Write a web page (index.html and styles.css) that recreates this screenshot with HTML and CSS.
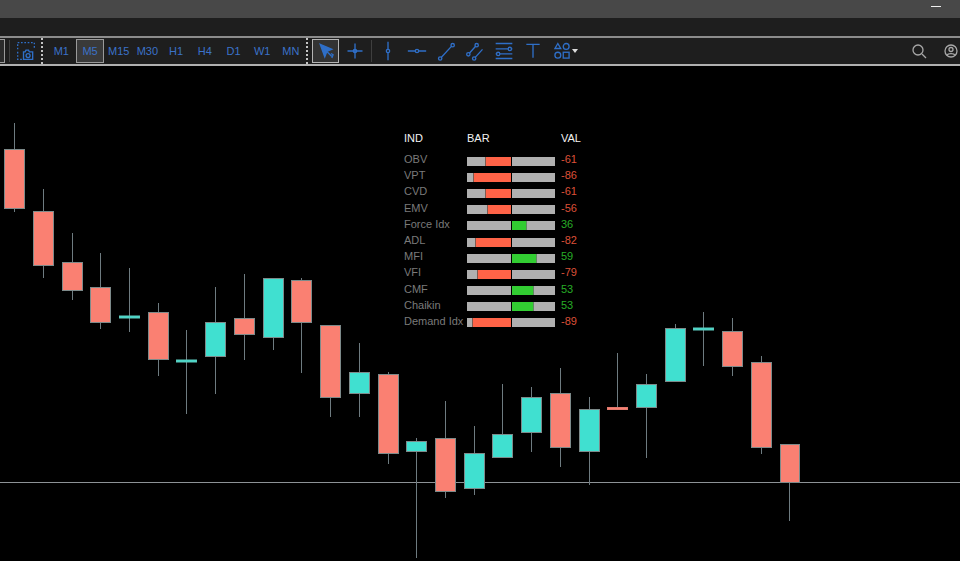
FILE: index.html
```html
<!DOCTYPE html>
<html lang="en">
<head>
    <meta charset="UTF-8">
    <meta name="viewport" content="width=device-width, initial-scale=1.0">
    <title>Chart Terminal</title>
    <link rel="stylesheet" href="styles.css">
</head>
<body>
    <div class="title-bar"><span class="window-dash"></span></div>
    <div class="menu-bar"></div>

    <!-- Toolbar -->
    <div class="toolbar">
        <div class="tool-cut"></div>
        <div class="tool-divider tool-divider-left"></div>
        <button class="tool tool-camera">
            <svg class="icon" width="20" height="20" viewBox="0 0 24 24">
                <path class="dash-line" d="M2 10V2h20v7M2 13v9h5"/>
                <path d="M9 13h2l1-2h3l1 2h4v9H9z"/>
                <circle cx="14.500" cy="17.500" r="2.400"/>
            </svg>
        </button>
        <div class="tool-dots"></div>
        <div class="timeframes">
            <button class="tf">M1</button>
            <button class="tf tf-active">M5</button>
            <button class="tf">M15</button>
            <button class="tf">M30</button>
            <button class="tf">H1</button>
            <button class="tf">H4</button>
            <button class="tf">D1</button>
            <button class="tf">W1</button>
            <button class="tf">MN</button>
        </div>
        <div class="tool-dots tool-dots-right"></div>
        <button class="tool tool-active">
            <svg class="icon" width="20" height="20" viewBox="0 0 24 24">
                <path class="icon-fill" d="M5 4l14 6-6 2.500L10.500 19z"/>
                <path d="M13 12.500l6 6"/>
                <path d="M18 15l2.500 1.500-1.500 4"/>
            </svg>
        </button>
        <button class="tool">
            <svg class="icon" width="20" height="20" viewBox="0 0 24 24">
                <path d="M12 3v18M3 12h18"/>
                <circle cx="12" cy="12" r="2"/>
            </svg>
        </button>
        <div class="tool-divider"></div>
        <button class="tool">
            <svg class="icon" width="20" height="20" viewBox="0 0 24 24">
                <path d="M12 1v9M12 14v9"/>
                <circle cx="12" cy="12" r="2"/>
            </svg>
        </button>
        <button class="tool">
            <svg class="icon" width="20" height="20" viewBox="0 0 24 24">
                <path d="M1 12h9M14 12h9"/>
                <circle cx="12" cy="12" r="2"/>
            </svg>
        </button>
        <button class="tool">
            <svg class="icon" width="20" height="20" viewBox="0 0 24 24">
                <path d="M6.500 19.500L18.500 6.500"/>
                <circle cx="5" cy="21" r="2"/>
                <circle cx="20" cy="5" r="2"/>
            </svg>
        </button>
        <button class="tool">
            <svg class="icon" width="20" height="20" viewBox="0 0 24 24">
                <path d="M5 15l8-9M12 20l9-10"/>
                <circle cx="4" cy="16" r="2"/>
                <circle cx="14" cy="5" r="2"/>
                <circle cx="11" cy="21" r="2"/>
            </svg>
        </button>
        <button class="tool">
            <svg class="icon" width="20" height="20" viewBox="0 0 24 24">
                <path d="M2 3h20M2 9.500h15M21 9.500h1M2 15.500h1M7 15.500h15M2 21h20"/>
                <circle cx="19" cy="9.500" r="2"/>
                <circle cx="5" cy="15.500" r="2"/>
            </svg>
        </button>
        <button class="tool">
            <svg class="icon" width="20" height="20" viewBox="0 0 24 24">
                <path d="M4 4h16M12 4v16"/>
            </svg>
        </button>
        <button class="tool tool-shapes">
            <svg class="icon" width="20" height="20" viewBox="0 0 24 24">
                <path d="M7 3l3.500 6h-7z"/>
                <circle cx="17" cy="6.500" r="3.500"/>
                <circle cx="7" cy="17" r="3.500"/>
                <rect x="13.500" y="13.500" width="7" height="7"/>
            </svg>
            <span class="caret"></span>
        </button>
        <button class="tool tool-search">
            <svg class="icon icon-gray" width="16" height="16" viewBox="0 0 16 16">
                <circle cx="7" cy="7" r="5"/>
                <path d="M11 11l4 4"/>
            </svg>
        </button>
        <button class="tool tool-user">
            <svg class="icon icon-gray" width="16" height="18" viewBox="0 0 16 18">
                <circle cx="8" cy="9" r="6"/>
                <circle cx="8" cy="7.500" r="2"/>
                <path d="M4 13.500c1-2.500 7-2.500 8 0"/>
            </svg>
        </button>
    </div>

    <!-- Chart -->
    <div class="chart">
        <svg class="candles" width="960" height="495" viewBox="0 66 960 495">
            <line class="crosshair" x1="0" x2="960" y1="482.500" y2="482.500"/>

            <g class="candle down"><line x1="14.500" x2="14.500" y1="123" y2="212"/><rect x="4.500" y="149.500" width="20" height="59"/></g>
            <g class="candle down"><line x1="43.500" x2="43.500" y1="189" y2="278"/><rect x="33.500" y="211.500" width="20" height="54"/></g>
            <g class="candle down"><line x1="72.500" x2="72.500" y1="233" y2="300"/><rect x="62.500" y="262.500" width="20" height="28"/></g>
            <g class="candle down"><line x1="100.500" x2="100.500" y1="253" y2="329"/><rect x="90.500" y="287.500" width="20" height="35"/></g>
            <g class="candle up doji"><line x1="129.500" x2="129.500" y1="268" y2="332"/><rect x="119.500" y="316" width="20" height="2"/></g>
            <g class="candle down"><line x1="158.500" x2="158.500" y1="303" y2="376"/><rect x="148.500" y="312.500" width="20" height="47"/></g>
            <g class="candle up doji"><line x1="186.500" x2="186.500" y1="330" y2="414"/><rect x="176.500" y="360" width="20" height="2"/></g>
            <g class="candle up"><line x1="215.500" x2="215.500" y1="287" y2="394"/><rect x="205.500" y="322.500" width="20" height="34"/></g>
            <g class="candle down"><line x1="244.500" x2="244.500" y1="274" y2="360"/><rect x="234.500" y="318.500" width="20" height="16"/></g>
            <g class="candle up"><line x1="273.500" x2="273.500" y1="278" y2="350"/><rect x="263.500" y="278.500" width="20" height="59"/></g>
            <g class="candle down"><line x1="301.500" x2="301.500" y1="278" y2="373"/><rect x="291.500" y="280.500" width="20" height="42"/></g>
            <g class="candle down"><line x1="330.500" x2="330.500" y1="325" y2="417"/><rect x="320.500" y="325.500" width="20" height="72"/></g>
            <g class="candle up"><line x1="359.500" x2="359.500" y1="343" y2="417"/><rect x="349.500" y="372.500" width="20" height="21"/></g>
            <g class="candle down"><line x1="388.500" x2="388.500" y1="372" y2="464"/><rect x="378.500" y="374.500" width="20" height="79"/></g>
            <g class="candle up"><line x1="416.500" x2="416.500" y1="438" y2="558"/><rect x="406.500" y="441.500" width="20" height="10"/></g>
            <g class="candle down"><line x1="445.500" x2="445.500" y1="401" y2="498"/><rect x="435.500" y="438.500" width="20" height="53"/></g>
            <g class="candle up"><line x1="474.500" x2="474.500" y1="426" y2="495"/><rect x="464.500" y="453.500" width="20" height="35"/></g>
            <g class="candle up"><line x1="502.500" x2="502.500" y1="384" y2="457"/><rect x="492.500" y="434.500" width="20" height="23"/></g>
            <g class="candle up"><line x1="531.500" x2="531.500" y1="387" y2="452"/><rect x="521.500" y="397.500" width="20" height="35"/></g>
            <g class="candle down"><line x1="560.500" x2="560.500" y1="368" y2="467"/><rect x="550.500" y="393.500" width="20" height="54"/></g>
            <g class="candle up"><line x1="589.500" x2="589.500" y1="397" y2="485"/><rect x="579.500" y="409.500" width="20" height="42"/></g>
            <g class="candle down doji"><line x1="617.500" x2="617.500" y1="353" y2="408"/><rect x="607.500" y="407.500" width="20" height="2"/></g>
            <g class="candle up"><line x1="646.500" x2="646.500" y1="374" y2="458"/><rect x="636.500" y="384.500" width="20" height="23"/></g>
            <g class="candle up"><line x1="675.500" x2="675.500" y1="324" y2="381"/><rect x="665.500" y="328.500" width="20" height="53"/></g>
            <g class="candle up doji"><line x1="703.500" x2="703.500" y1="312" y2="366"/><rect x="693.500" y="328" width="20" height="2"/></g>
            <g class="candle down"><line x1="732.500" x2="732.500" y1="318" y2="376"/><rect x="722.500" y="331.500" width="20" height="35"/></g>
            <g class="candle down"><line x1="761.500" x2="761.500" y1="356" y2="454"/><rect x="751.500" y="362.500" width="20" height="85"/></g>
            <g class="candle down"><line x1="789.500" x2="789.500" y1="445" y2="521"/><rect x="780.500" y="444.500" width="19" height="38"/></g>
        </svg>

        <!-- Indicator panel over the chart -->
        <div class="panel">
            <div class="panel-row panel-head">
                <span>IND</span><span>BAR</span><span>VAL</span>
            </div>
            <div class="panel-row">
                <span class="name">OBV</span>
                <div class="bar"><div class="half half-left"><div class="fill fill-red" style="width: 26px"></div></div><div class="half"></div></div>
                <span class="val val-red">-61</span>
            </div>
            <div class="panel-row">
                <span class="name">VPT</span>
                <div class="bar"><div class="half half-left"><div class="fill fill-red" style="width: 38px"></div></div><div class="half"></div></div>
                <span class="val val-red">-86</span>
            </div>
            <div class="panel-row">
                <span class="name">CVD</span>
                <div class="bar"><div class="half half-left"><div class="fill fill-red" style="width: 26px"></div></div><div class="half"></div></div>
                <span class="val val-red">-61</span>
            </div>
            <div class="panel-row">
                <span class="name">EMV</span>
                <div class="bar"><div class="half half-left"><div class="fill fill-red" style="width: 24px"></div></div><div class="half"></div></div>
                <span class="val val-red">-56</span>
            </div>
            <div class="panel-row">
                <span class="name">Force Idx</span>
                <div class="bar"><div class="half half-left"></div><div class="half"><div class="fill fill-green" style="width: 15px"></div></div></div>
                <span class="val val-green">36</span>
            </div>
            <div class="panel-row">
                <span class="name">ADL</span>
                <div class="bar"><div class="half half-left"><div class="fill fill-red" style="width: 36px"></div></div><div class="half"></div></div>
                <span class="val val-red">-82</span>
            </div>
            <div class="panel-row">
                <span class="name">MFI</span>
                <div class="bar"><div class="half half-left"></div><div class="half"><div class="fill fill-green" style="width: 25px"></div></div></div>
                <span class="val val-green">59</span>
            </div>
            <div class="panel-row">
                <span class="name">VFI</span>
                <div class="bar"><div class="half half-left"><div class="fill fill-red" style="width: 34px"></div></div><div class="half"></div></div>
                <span class="val val-red">-79</span>
            </div>
            <div class="panel-row">
                <span class="name">CMF</span>
                <div class="bar"><div class="half half-left"></div><div class="half"><div class="fill fill-green" style="width: 22px"></div></div></div>
                <span class="val val-green">53</span>
            </div>
            <div class="panel-row">
                <span class="name">Chaikin</span>
                <div class="bar"><div class="half half-left"></div><div class="half"><div class="fill fill-green" style="width: 22px"></div></div></div>
                <span class="val val-green">53</span>
            </div>
            <div class="panel-row">
                <span class="name">Demand Idx</span>
                <div class="bar"><div class="half half-left"><div class="fill fill-red" style="width: 39px"></div></div><div class="half"></div></div>
                <span class="val val-red">-89</span>
            </div>
        </div>
    </div>
</body>
</html>
```

FILE: styles.css
```css
* {
    margin: 0;
    padding: 0;
    box-sizing: border-box;
    font-family: 'Liberation Sans', Arial, sans-serif;
}

body {
    width: 960px;
    height: 561px;
    overflow: hidden;
    background-color: #000;
}

/* Window chrome */
.title-bar {
    height: 18px;
    background-color: #484848;
    display: flex;
    justify-content: flex-end;
    padding: 6px 19px 0 0;
}

.window-dash {
    width: 10px;
    height: 1px;
    background-color: #eee;
}

.menu-bar {
    height: 18px;
    background-color: #1e1e1e;
}

/* Toolbar */
.toolbar {
    height: 30px;
    background-color: #1e1e1e;
    border-top: 2px solid #8c8c8c;
    border-bottom: 2px solid #b0b0b0;
    display: flex;
    align-items: center;
}

.tool {
    width: 29px;
    height: 24px;
    flex: none;
    background: none;
    border: 1px solid transparent;
    display: flex;
    align-items: center;
    justify-content: center;
}

.tool-cut {
    width: 5px;
    height: 24px;
    flex: none;
    margin-right: 4px;
    background-color: #2b2b2b;
    border: 1px solid #9a9a9a;
    border-left: none;
}

.tool-divider {
    width: 1px;
    height: 22px;
    flex: none;
    margin: 0 1px 0 2px;
    background-color: #3f3f3f;
}

.tool-divider-left {
    margin: 0 5px 0 0;
}

.tool-dots {
    width: 2px;
    height: 26px;
    flex: none;
    margin: 0 4px 0 0;
    border-left: 2px dotted #c4c4c4;
}

.tool-dots-right {
    margin: 0 4px 0 1px;
}

.tool-camera {
    width: 22px;
    margin-right: 4px;
}

.tool-active {
    width: 27px;
    margin-right: 1px;
    background-color: #333;
    border-color: #b4b4b4;
}

.tool-shapes {
    position: relative;
}

.caret {
    position: absolute;
    left: 24px;
    top: 9px;
    border-left: 3px solid transparent;
    border-right: 3px solid transparent;
    border-top: 4px solid #ddd;
}

.tool-search {
    width: 24px;
    margin-left: auto;
    margin-right: 11px;
}

.tool-user {
    width: 18px;
}

.icon {
    flex: none;
    fill: none;
    stroke: #2f6fc8;
    stroke-width: 1.6;
}

.icon-fill {
    fill: #2f6fc8;
}

.icon-gray {
    stroke: #a8a8a8;
    stroke-width: 1.3;
}

.dash-line {
    stroke-dasharray: 2 2;
}

.timeframes {
    display: grid;
    grid-template-columns: repeat(9, 28.7px);
    flex: none;
}

.tf {
    height: 24px;
    background: none;
    border: 1px solid transparent;
    color: #3b72c9;
    font-size: 11px;
}

.tf-active {
    background-color: #3a3a3a;
    border-color: #9a9a9a;
}

/* Chart */
.chart {
    position: relative;
    height: 495px;
    background-color: #000;
    overflow: hidden;
}

.candles {
    display: block;
}

.crosshair {
    stroke: #8d9296;
    stroke-width: 1;
}

.candle line {
    stroke: #6e7b80;
    stroke-width: 1;
}

.candle rect {
    stroke: #7d8a8a;
    stroke-width: 1;
}

.down rect {
    fill: #fa8072;
}

.up rect {
    fill: #40e0d0;
}

.up.doji rect {
    stroke: #5fc9bd;
}

.down.doji rect {
    stroke: #e07a6e;
}

/* Indicator panel */
.panel {
    position: absolute;
    left: 404px;
    top: 64px;
}

.panel-row {
    height: 16.2px;
    display: grid;
    grid-template-columns: 63px 94px 30px;
    align-items: center;
    color: #7a7a7a;
    font-size: 11px;
}

.panel-head {
    height: 21px;
    padding-bottom: 5px;
    color: #f2f2f2;
}

.bar {
    width: 88px;
    height: 9px;
    display: flex;
    gap: 1px;
    position: relative;
    top: 2px;
}

.half {
    flex: 1;
    background-color: #b0b0b0;
    display: flex;
}

.half-left {
    justify-content: flex-end;
}

.fill {
    height: 100%;
}

.fill-red {
    background-color: #ff6347;
    border-left: 1px solid #7c5a50;
}

.fill-green {
    background-color: #32cd32;
    border-right: 1px solid #5f8a5f;
}

.val-red {
    color: #dc5038;
}

.val-green {
    color: #27ad27;
}
```
